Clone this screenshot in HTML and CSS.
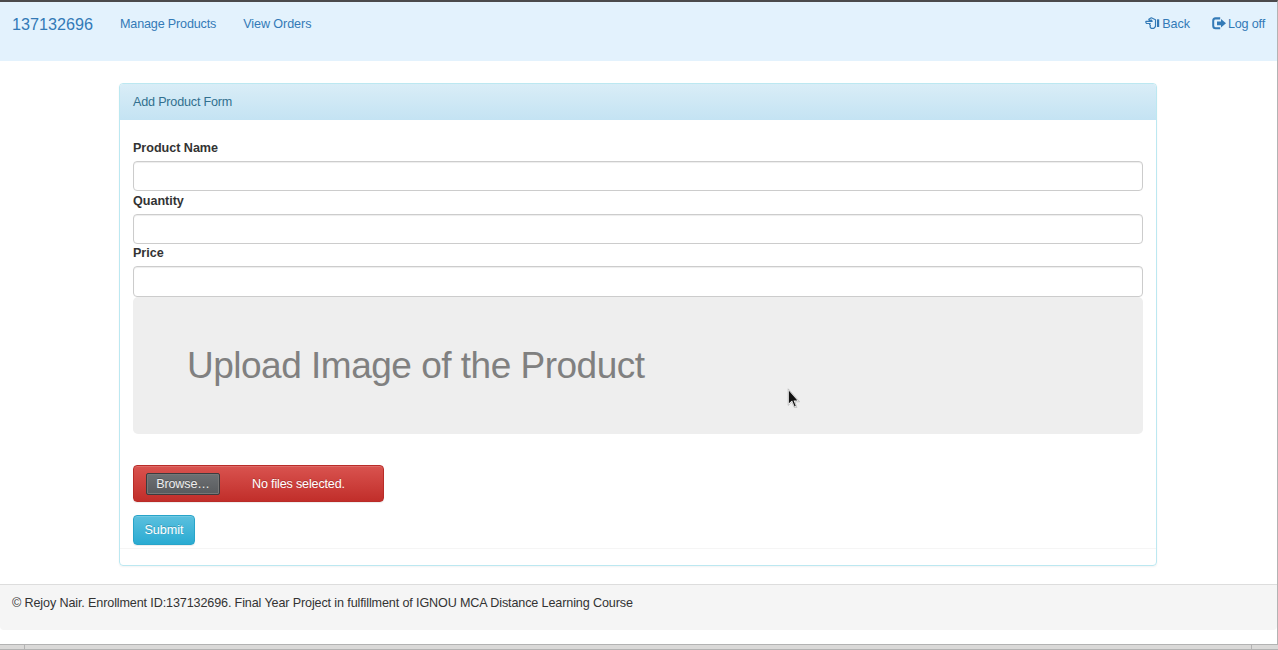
FILE: index.html
```
<!DOCTYPE html>
<html lang="en">
<head>
<meta charset="utf-8">
<title>Add Product</title>
<link rel="stylesheet" href="styles.css">
</head>
<body>
<div class="window">
  <nav class="navbar">
    <a class="brand">137132696</a>
    <a class="link">Manage Products</a>
    <a class="link orders">View Orders</a>
    <span class="spacer"></span>
    <a class="link back"><svg class="hand" width="15" height="13" viewBox="0 0 15 13"><path d="M3.8 2.2 6.3.8l4.2 1.9v6.8L8.8 11.4H6.2L5 9.9l.4-1.2-.8-1 .6-1.2H1.5Q.6 5.9.9 4.4h6.2L6.6 3.1 4.3 3.4z" fill="none" stroke="currentColor" stroke-width="1.2" stroke-linejoin="round"/><path d="M12 2.3h2.2v7.7H12z" fill="currentColor"/></svg>Back</a>
    <a class="link logoff"><svg class="exit" width="14" height="13" viewBox="0 0 14 12" preserveAspectRatio="none"><path d="M8.2 1.3H3.5Q1.2 1.3 1.2 3.6v4.5q0 2.3 2.3 2.3h4.7" fill="none" stroke="currentColor" stroke-width="2"/><path d="M5 4.2h4V1.8l5 4-5 4V7.5H5z" fill="currentColor"/></svg>Log off</a>
  </nav>
  <main class="page">
    <section class="panel">
      <header class="heading">Add Product Form</header>
      <form class="body">
        <label class="label" for="name">Product Name</label>
        <input class="control" id="name">
        <label class="label" for="quantity">Quantity</label>
        <input class="control" id="quantity">
        <label class="label compact" for="price">Price</label>
        <input class="control last" id="price">
        <div class="jumbo"><h1 class="title">Upload Image of the Product</h1></div>
        <div class="file"><span class="browse">Browse…</span><span class="none">No files selected.</span></div>
        <button class="submit" type="button">Submit</button>
      </form>
      <div class="panel-end"></div>
    </section>
  </main>
  <footer class="footer">© Rejoy Nair. Enrollment ID:137132696. Final Year Project in fulfillment of IGNOU MCA Distance Learning Course</footer>
  <div class="scrollbar"></div>
</div>
<svg class="cursor" width="15" height="21" viewBox="0 0 14 20"><path d="M1 .8v15.7l3.5-3 2.2 5h2.6l-2-5.4h4.5z" fill="#fff" stroke="#aaa" stroke-width=".6"/><path d="M1.7 2.5v12l3-2.6 2.4 5.7 1.1-.5-2.1-5.2h3.7z" fill="#111"/></svg>
</body>
</html>
```
FILE: styles.css
```
* { box-sizing: border-box; }
body { margin: 0; background: #fff; color: #333; font-family: "Liberation Sans", Arial, sans-serif; font-size: 12.6px; line-height: 18px; letter-spacing: -.13px; overflow: hidden; }
.window { display: flex; flex-direction: column; height: 650px; border-top: 2px solid #4b4a4c; border-right: 1px solid #b3b3b3; }
.navbar { display: flex; height: 59px; flex: none; padding: 13px 12px 0; background: #e3f2fd; color: #337ab7; }
.brand { width: 108px; font-size: 16.2px; letter-spacing: 0; }
.link { height: 18px; white-space: nowrap; letter-spacing: -.17px; }
.orders { margin-left: 27px; letter-spacing: -.08px; }
.spacer { flex: 1; }
.back { letter-spacing: -.1px; }
.logoff { margin-left: 22px; letter-spacing: -.17px; }
.hand { margin-right: 2px; vertical-align: -2px; }
.exit { margin-right: 2px; vertical-align: -2px; }
.page { padding: 22px 120px 0 119px; height: 523px; flex: none; }
.panel { height: 483px; border: 1px solid #bce8f1; border-radius: 4px; box-shadow: 0 1px 2px rgba(0,0,0,.05); }
.heading { height: 36px; padding: 9px 13px; color: #31708f; letter-spacing: -.19px; background: linear-gradient(#d9edf7, #c4e3f3); border-radius: 3px 3px 0 0; }
.body { display: flex; flex-direction: column; align-items: flex-start; height: 429px; padding: 18px 13px 0; border-bottom: 1px solid #f5f5f5; }
.label { height: 23px; flex: none; padding-top: 1px; font-weight: bold; letter-spacing: -.03px; }
.label.compact { height: 22px; padding-top: 0; }
.control { display: block; width: 100%; height: 30px; flex: none; padding: 5px 11px; border: 1px solid #ccc; border-radius: 4px; box-shadow: inset 0 1px 1px rgba(0,0,0,.075); background: #fff; }
.control.last { height: 31px; }
.jumbo { width: 100%; height: 137px; flex: none; margin-bottom: 31px; padding: 48px 54px; border-radius: 5px; background: #eee; }
.title { margin: 0; color: #808080; font-size: 37px; line-height: 41px; font-weight: normal; letter-spacing: -.5px; white-space: nowrap; }
.file { display: flex; align-items: center; width: 251px; height: 37px; flex: none; margin-bottom: 13px; padding-left: 12px; border: 1px solid #b92c28; border-radius: 4px; background: linear-gradient(#d9534f, #c12e2a); box-shadow: inset 0 1px rgba(255,255,255,.15), 0 1px 1px rgba(0,0,0,.075); color: #fff; text-shadow: 0 -1px rgba(0,0,0,.2); }
.browse { width: 74px; height: 22px; margin-right: 32px; padding-top: 1px; border: 1px solid #3c3c3f; border-radius: 2px; background: linear-gradient(#6d7073, #595b5e); box-shadow: inset 0 0 0 1px #777; color: #eee; text-align: center; line-height: 18px; }
.none { letter-spacing: -.17px; white-space: nowrap; }
.submit { width: 62px; height: 30px; flex: none; padding: 0; border: 1px solid #28a4c9; border-radius: 4px; background: linear-gradient(#5bc0de, #2aabd2); box-shadow: inset 0 1px rgba(255,255,255,.15), 0 1px 1px rgba(0,0,0,.075); color: #fff; font: inherit; text-shadow: 0 -1px rgba(0,0,0,.2); }
.panel-end { height: 16px; }
.footer { height: 46px; flex: none; padding: 9px 12px; border-top: 1px solid #ddd; border-radius: 0 0 4px 4px; background: #f5f5f5; white-space: nowrap; }
.scrollbar { height: 6px; flex: none; margin-top: 14px; margin-right: -1px; border: solid #b3b3b3; border-width: 1px 0; background: linear-gradient(#b3b3b3, #b3b3b3) 24px 0 / 1px 100% no-repeat, linear-gradient(#b3b3b3, #b3b3b3) 1251px 0 / 1px 100% no-repeat, #dad9d8; }
.cursor { position: absolute; left: 787px; top: 388px; }
```
